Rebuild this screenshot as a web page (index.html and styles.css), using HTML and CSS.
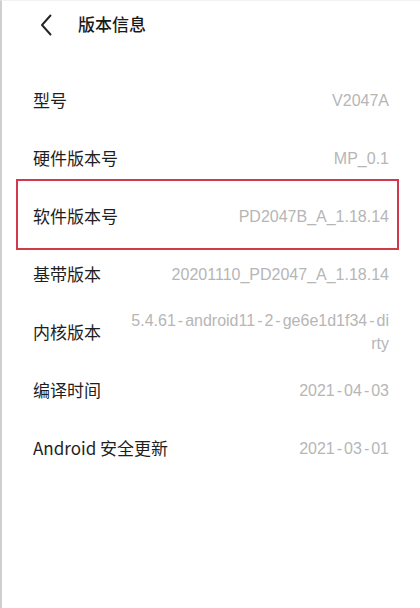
FILE: index.html
```html
<!DOCTYPE html>
<html lang="zh-CN">
<head>
<meta charset="utf-8">
<title>版本信息</title>
<link rel="stylesheet" href="styles.css">
</head>
<body>
<div class="screen">
  <header class="topbar">
    <span class="back" aria-label="返回">
      <svg width="12" height="22" viewBox="0 0 12 22"><path d="M10.5 1.5 L2 11 L10.5 20.5" fill="none" stroke="#222" stroke-width="1.9" stroke-linecap="round" stroke-linejoin="round"/></svg>
    </span>
    <h1 class="title">版本信息</h1>
  </header>
  <ul class="list">
    <li class="row"><span class="label">型号</span><span class="value">V2047A</span></li>
    <li class="row"><span class="label">硬件版本号</span><span class="value">MP_0.1</span></li>
    <li class="row highlighted"><span class="label">软件版本号</span><span class="value">PD2047B_A_1.18.14</span><span class="mark"></span></li>
    <li class="row"><span class="label">基带版本</span><span class="value">20201110_PD2047_A_1.18.14</span></li>
    <li class="row"><span class="label">内核版本</span><span class="value multi">5.4.61<span class="hy">-</span>android11<span class="hy">-</span>2<span class="hy">-</span>ge6e1d1f34<span class="hy">-</span>di<br>rty</span></li>
    <li class="row"><span class="label">编译时间</span><span class="value">2021<span class="hy">-</span>04<span class="hy">-</span>03</span></li>
    <li class="row"><span class="label">Android 安全更新</span><span class="value">2021<span class="hy">-</span>03<span class="hy">-</span>01</span></li>
  </ul>
</div>
</body>
</html>
```

FILE: styles.css
```css
* { box-sizing: border-box; }
html, body { margin: 0; padding: 0; background: #fff; }
body {
  font-family: "Noto Sans CJK SC", "Noto Sans", sans-serif;
  color: #1e1e1e;
}
.screen {
  min-height: 608px;
  border-left: 2px solid #cfcfcf;
  border-top: 1px solid #f2f2f2;
}
.topbar {
  height: 70px;
  display: flex;
  align-items: flex-start;
  padding: 12px 0 0 38px;
}
.back {
  display: flex;
  width: 12px;
  height: 22px;
  margin-top: 1px;
}
.title {
  margin: 0 0 0 26px;
  font-size: 17px;
  font-weight: 500;
  line-height: 22px;
  color: #1a1a1a;
}
.list {
  list-style: none;
  margin: 0;
  padding: 0;
}
.row {
  position: relative;
  height: 58px;
  display: flex;
  align-items: center;
  justify-content: space-between;
  padding: 0 31px 0 31px;
}
.label {
  font-size: 17px;
  line-height: 24px;
  color: #1e1e1e;
  white-space: nowrap;
}
.value {
  font-family: "Liberation Sans", "Roboto", sans-serif;
  font-size: 16px;
  line-height: 23px;
  color: #b6b6b6;
  text-align: right;
  white-space: nowrap;
}
.hy { margin: 0 2px; }
.value.multi { line-height: 23px; }
.mark {
  position: absolute;
  top: -8px;
  bottom: -5px;
  left: 14px;
  right: 21px;
  border: 2px solid #d13a4c;
  pointer-events: none;
}
```
